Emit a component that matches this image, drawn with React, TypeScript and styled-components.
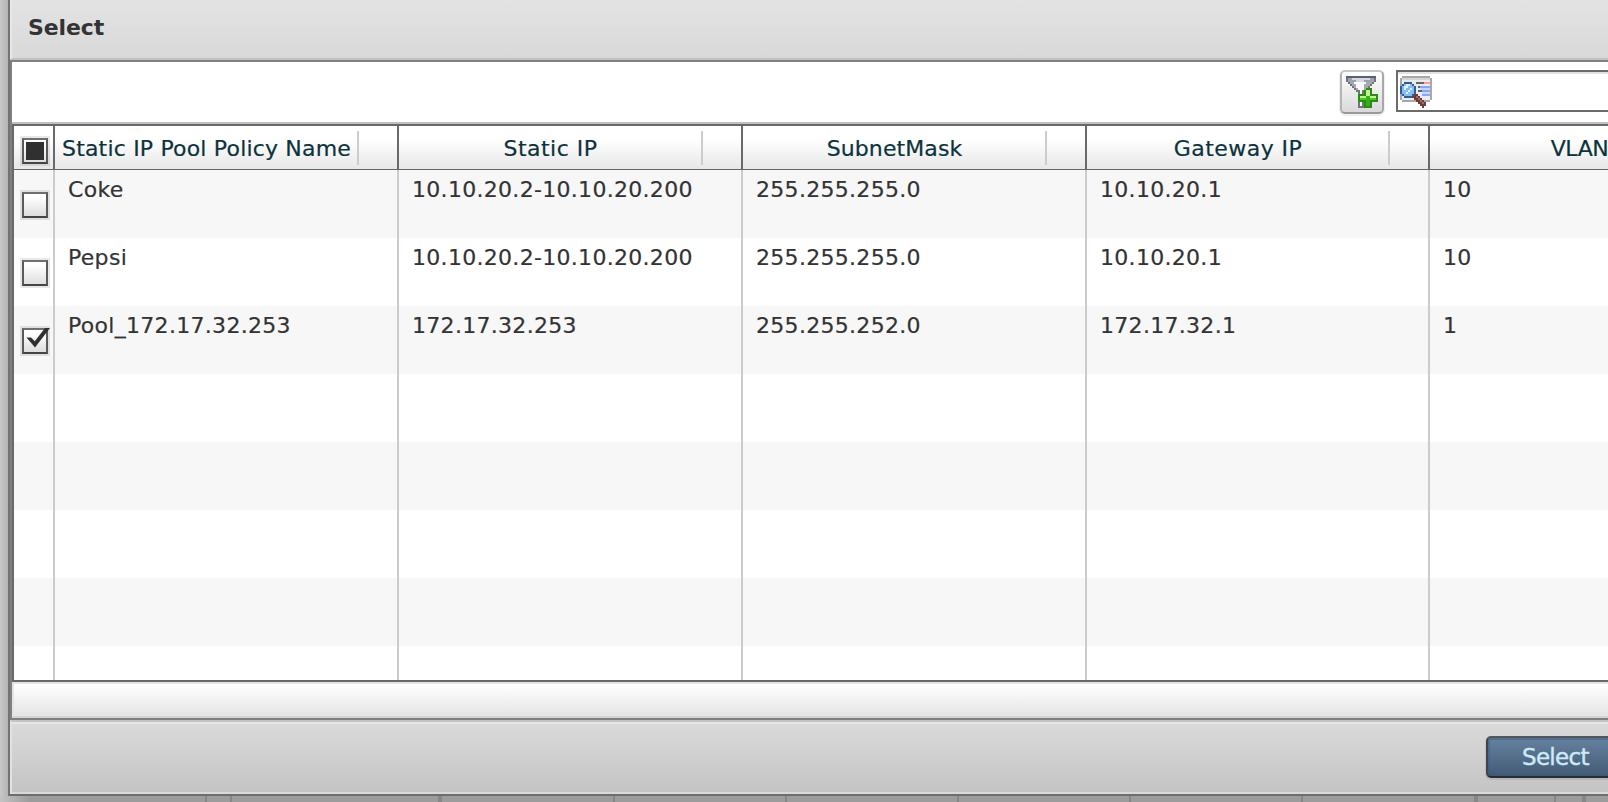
import React, { memo, useState } from "react";
import styled, { createGlobalStyle, css } from "styled-components";

const GlobalStyle = createGlobalStyle`
  html, body {
    margin: 0;
    overflow: hidden;
  }
  body {
    background: #9c9c9c;
    font-family: "DejaVu Sans", Verdana, sans-serif;
    color: #333;
  }
  * {
    box-sizing: border-box;
  }
`;

type Pool = {
  name: string;
  ip: string;
  mask: string;
  gateway: string;
  vlan: string;
};

const POOLS: Pool[] = [
  {
    name: "Coke",
    ip: "10.10.20.2-10.10.20.200",
    mask: "255.255.255.0",
    gateway: "10.10.20.1",
    vlan: "10",
  },
  {
    name: "Pepsi",
    ip: "10.10.20.2-10.10.20.200",
    mask: "255.255.255.0",
    gateway: "10.10.20.1",
    vlan: "10",
  },
  {
    name: "Pool_172.17.32.253",
    ip: "172.17.32.253",
    mask: "255.255.252.0",
    gateway: "172.17.32.1",
    vlan: "1",
  },
];

const EMPTY_ROWS = 5;

const HEADERS: { label: string; spacing: number }[] = [
  { label: "Static IP Pool Policy Name", spacing: 0.18 },
  { label: "Static IP", spacing: 0.5 },
  { label: "SubnetMask", spacing: 0.1 },
  { label: "Gateway IP", spacing: 0.45 },
  { label: "VLAN", spacing: -0.4 },
];

// right edges of the columns that show under the dialog
const BACKDROP_LINES = [
  { width: 207, thick: false },
  { width: 25, thick: false },
  { width: 210, thick: true },
  { width: 173, thick: false },
  { width: 172, thick: false },
  { width: 172, thick: false },
  { width: 172, thick: false },
  { width: 172, thick: false },
  { width: 175, thick: true },
  { width: 78, thick: false },
  { width: 30, thick: true },
];

const Page = styled.div`
  width: 1608px;
  height: 802px;
  display: flex;
  flex-direction: column;
  overflow: hidden;
  background: linear-gradient(90deg, #c8c8c8 0, #b4b4b4 8px, #a8a8a8 18px, #9c9c9c 28px);
`;

const Dialog = styled.div`
  width: 1900px;
  height: 796px;
  flex: none;
  margin-left: 8px;
  display: flex;
  flex-direction: column;
  border-left: 2px solid #737373;
  border-bottom: 2px solid #6e6e6e;
`;

const TitleBar = styled.div`
  height: 60px;
  flex: none;
  padding: 14px 0 0 16px;
  border-left: 2px solid #e8e8e8;
  border-bottom: 2px solid #c0c0c0;
  background: linear-gradient(#e3e3e3, #d9d9d9);
  font-size: 22px;
  font-weight: bold;
  line-height: 28px;
  letter-spacing: -0.1px;
`;

const Body = styled.div`
  height: 660px;
  flex: none;
  display: flex;
  flex-direction: column;
  border: solid #808080;
  border-width: 2px 0 2px 2px;
  background: #fff;
`;

const Toolbar = styled.div`
  height: 62px;
  flex: none;
  display: flex;
  align-items: flex-start;
  gap: 12px;
  padding: 8px 0 0 1328px;
  border-bottom: 2px solid #c0c0c0;
`;

const FilterButton = styled.button`
  width: 44px;
  height: 44px;
  padding: 4px;
  border: 2px solid;
  border-color: #c6c6c6 #a8a8a8 #999 #b4b4b4;
  border-radius: 5px;
  background: linear-gradient(#fff, #d9d9d9);
  box-shadow: 0 1px 0 1px #f0f0f0;
`;

const SearchBox = styled.div`
  width: 400px;
  height: 42px;
  padding: 4px 2px;
  border: 2px solid #6b6b6b;
  background: #fff;
  box-shadow: inset 0 2px 0 #e2e2e2;
`;

const Grid = styled.div`
  height: 558px;
  flex: none;
  border: solid #696969;
  border-width: 2px 0 2px 2px;
  overflow: hidden;
`;

const columns = css`
  display: grid;
  grid-template-columns: 41px 344px 344px 344px 343px 344px;
`;

const HeaderRow = styled.div`
  ${columns}
  height: 44px;
  border-bottom: 1px solid #666;
  background: linear-gradient(#fff 30%, #e7e7e7);
`;

const HeaderCell = styled.div<{ $spacing: number }>`
  display: flex;
  padding-top: 5px;
  border-right: 2px solid #696969;
  color: #0b333c;
  font-size: 22px;
  line-height: 28px;
  letter-spacing: ${({ $spacing }) => $spacing}px;
  white-space: nowrap;

  &:last-child {
    padding-right: 4px;
  }
`;

const HeaderLabel = styled.div`
  flex: 1;
  padding: 4px 0 0 1px;
  text-align: center;
  -webkit-text-stroke: 0.2px #0b333c;
`;

const HeaderSplit = styled.div`
  width: 40px;
  height: 34px;
  flex: none;
  border-left: 2px solid #ccc;
`;

const CheckHeader = styled.div`
  display: flex;
  padding: 12px 0 0 8px;
  border-right: 2px solid #696969;
`;

const Row = styled.div<{ $odd: boolean }>`
  ${columns}
  height: 68px;
  background: ${({ $odd }) => ($odd ? "#f7f7f7" : "#fff")};
`;

const Cell = styled.div`
  padding: 6px 0 0 13px;
  border-right: 2px solid #ccc;
  font-size: 22px;
  line-height: 28px;
  letter-spacing: 0.3px;
  white-space: nowrap;
  -webkit-text-stroke: 0.2px #333;
`;

const CheckCell = styled.div`
  display: flex;
  padding: 22px 0 0 8px;
  border-right: 2px solid #ccc;
`;

const CheckBox = styled.div`
  width: 26px;
  height: 26px;
  border: 2px solid;
  border-color: #707070 #5a5a5a #444 #5a5a5a;
  background: linear-gradient(#fff 15%, #dedede);
  box-shadow: 0 0 0 2px rgba(0, 0, 0, 0.09);
  svg {
    display: block;
    overflow: visible;
  }
`;

const MixedMark = styled.div`
  width: 18px;
  height: 18px;
  margin: 2px;
  background: #303030;
`;

const Strip = styled.div`
  height: 36px;
  flex: none;
  border: 2px solid #e4e4e4;
  border-bottom-color: #d4d4d4;
  background: linear-gradient(#fff, #e5e5e5);
`;

const Footer = styled.div`
  height: 74px;
  flex: none;
  padding: 14px 0 0 1474px;
  border-top: 2px solid #c4c4c4;
  border-bottom: 2px solid #d8d8d8;
  border-left: 2px solid #e2e2e2;
  background: linear-gradient(#e6e6e6 2px, #dadada 2px, #c4c4c4);
`;

const SelectButton = styled.button`
  display: block;
  width: 142px;
  height: 42px;
  padding: 0 0 0 34px;
  border: 2px solid;
  border-color: #555 #333 #2b2b2b #444;
  border-radius: 5px;
  background: linear-gradient(#66829f, #425b75);
  box-shadow: inset 0 0 0 2px rgba(43, 91, 139, 0.4), 0 1px 0 1px rgba(0, 0, 0, 0.08);
  color: #cdeaf8;
  font-family: "DejaVu Sans", Verdana, sans-serif;
  font-size: 23px;
  line-height: 38px;
  letter-spacing: -0.7px;
  text-align: left;
  -webkit-text-stroke: 0.4px #cdeaf8;
`;

const Backdrop = styled.div`
  height: 6px;
  flex: none;
  display: flex;
  background: linear-gradient(90deg, #c4c4c4, #9c9c9c 30px);
`;

const BackdropCell = styled.div<{ $width: number; $thick: boolean }>`
  width: ${({ $width }) => $width}px;
  flex: none;
  border-right: ${({ $thick }) => ($thick ? "4px" : "2px")} solid #868686;
`;

const FilterIcon: React.FC = () => (
  <svg width="32" height="32" viewBox="0 0 16 16" shapeRendering="crispEdges">
    <path d="M0 0h15v3h-1v1h-1v1h-1v1h-1v1h-1v1H9v8H6V8H5V7H4V6H3V5H2V4H1V3H0z" fill="#70757e" />
    <path d="M0 0h15v1H0z" fill="#59616e" />
    <path d="M1 1h13v2H1z" fill="#9da2ae" />
    <path d="M3 1h9v1H3zM5 2h4v1H5z" fill="#d5d8de" />
    <path d="M2 3h11v1H2zM3 4h9v1H3zM4 5h7v1H4zM5 6h5v1H5z" fill="#a6a9b0" />
    <path d="M4 3h6v1H4zM5 4h4v1H5zM5 5h4v1H5zM6 6h3v1H6zM7 7h1v8H7z" fill="#fafafa" />
    <path d="M10 6h3v3h3v4h-3v3h-4v-3H6V9h3V7h1z" fill="#2a8c16" />
    <path d="M10 7h2v3h3v2h-3v3h-2v-3H7v-2h3z" fill="#42cc1c" />
    <path d="M10 7h2v3h3v1H7v-1h3z" fill="#c7f58d" />
    <path d="M10 10h2v5h-2z" fill="#31b411" />
  </svg>
);

const SearchIcon: React.FC = () => (
  <svg width="32" height="32" viewBox="0 0 16 16" shapeRendering="crispEdges">
    <path d="M1 0h14v1h1v11h-1v1H1v-1H0V1h1z" fill="#a8a8a8" />
    <path d="M1 1h14v11H1z" fill="#ebebeb" />
    <path d="M1 1h14v1H1z" fill="#d6d6d6" />
    <path d="M8 3h4v1H8zM9 5h1v1H9zM9 7h2v1H9z" fill="#666" />
    <path d="M12 3h3v1h-3z" fill="#ff9b93" />
    <path d="M10 5h5v1h-5zM11 7h4v1h-4zM11 9h4v1h-4z" fill="#80a8fc" />
    <path d="M10 6h5v1h-5zM11 8h4v1h-4z" fill="#c6d7fb" />
    <path d="M2 3h4v1h1v1h1v4H7v1H6v1H2v-1H1V9H0V5h1V4h1z" fill="#2f5e9c" />
    <path d="M2 4h4v1h1v4H6v1H2V9H1V5h1z" fill="#82bdf7" />
    <path d="M3 4h2v1H4v1H3v1H2V5h1zM5 6h1v1H5v1H4v1H3V8h1V7h1z" fill="#e4f4ff" />
    <path d="M7 9h2v1h1v1h1v1h1v1h1v2h-1v1h-1v-1h-1v-1H9v-1H8v-1H7v-1H6v-1h1z" fill="#6b3c3a" />
    <path d="M8 10h1v1h1v1h1v1h1v1h-1v-1h-1v-1H9v-1H8z" fill="#a56c68" />
  </svg>
);

const CheckMark: React.FC = () => (
  <svg width="22" height="22" viewBox="0 0 22 22">
    <path d="M2.5 7.5H7l3.8 3.8L21-2h5L11 17.5z" fill="#303030" />
  </svg>
);

const SelectDialog: React.FC = () => {
  const [selected, setSelected] = useState(2);

  return (
    <Dialog>
      <TitleBar>Select</TitleBar>
      <Body>
        <Toolbar>
          <FilterButton aria-label="Add filter">
            <FilterIcon />
          </FilterButton>
          <SearchBox>
            <SearchIcon />
          </SearchBox>
        </Toolbar>
        <Grid>
          <HeaderRow>
            <CheckHeader>
              <CheckBox>
                <MixedMark />
              </CheckBox>
            </CheckHeader>
            {HEADERS.map(({ label, spacing }) => (
              <HeaderCell key={label} $spacing={spacing}>
                <HeaderLabel>{label}</HeaderLabel>
                <HeaderSplit />
              </HeaderCell>
            ))}
          </HeaderRow>
          {POOLS.map((pool, index) => (
            <Row key={pool.name} $odd={index % 2 === 0}>
              <CheckCell onClick={() => setSelected(index)}>
                <CheckBox>{selected === index && <CheckMark />}</CheckBox>
              </CheckCell>
              <Cell>{pool.name}</Cell>
              <Cell>{pool.ip}</Cell>
              <Cell>{pool.mask}</Cell>
              <Cell>{pool.gateway}</Cell>
              <Cell>{pool.vlan}</Cell>
            </Row>
          ))}
          {[...Array(EMPTY_ROWS)].map((_, index) => (
            <Row key={index} $odd={(index + POOLS.length) % 2 === 0}>
              {[...Array(6)].map((_, cell) => (
                <Cell key={cell} />
              ))}
            </Row>
          ))}
        </Grid>
        <Strip />
      </Body>
      <Footer>
        <SelectButton>Select</SelectButton>
      </Footer>
    </Dialog>
  );
};

const App: React.FC = () => (
  <>
    <GlobalStyle />
    <Page>
      <SelectDialog />
      <Backdrop>
        {BACKDROP_LINES.map(({ width, thick }, index) => (
          <BackdropCell key={index} $width={width} $thick={thick} />
        ))}
      </Backdrop>
    </Page>
  </>
);

export default memo(App);
